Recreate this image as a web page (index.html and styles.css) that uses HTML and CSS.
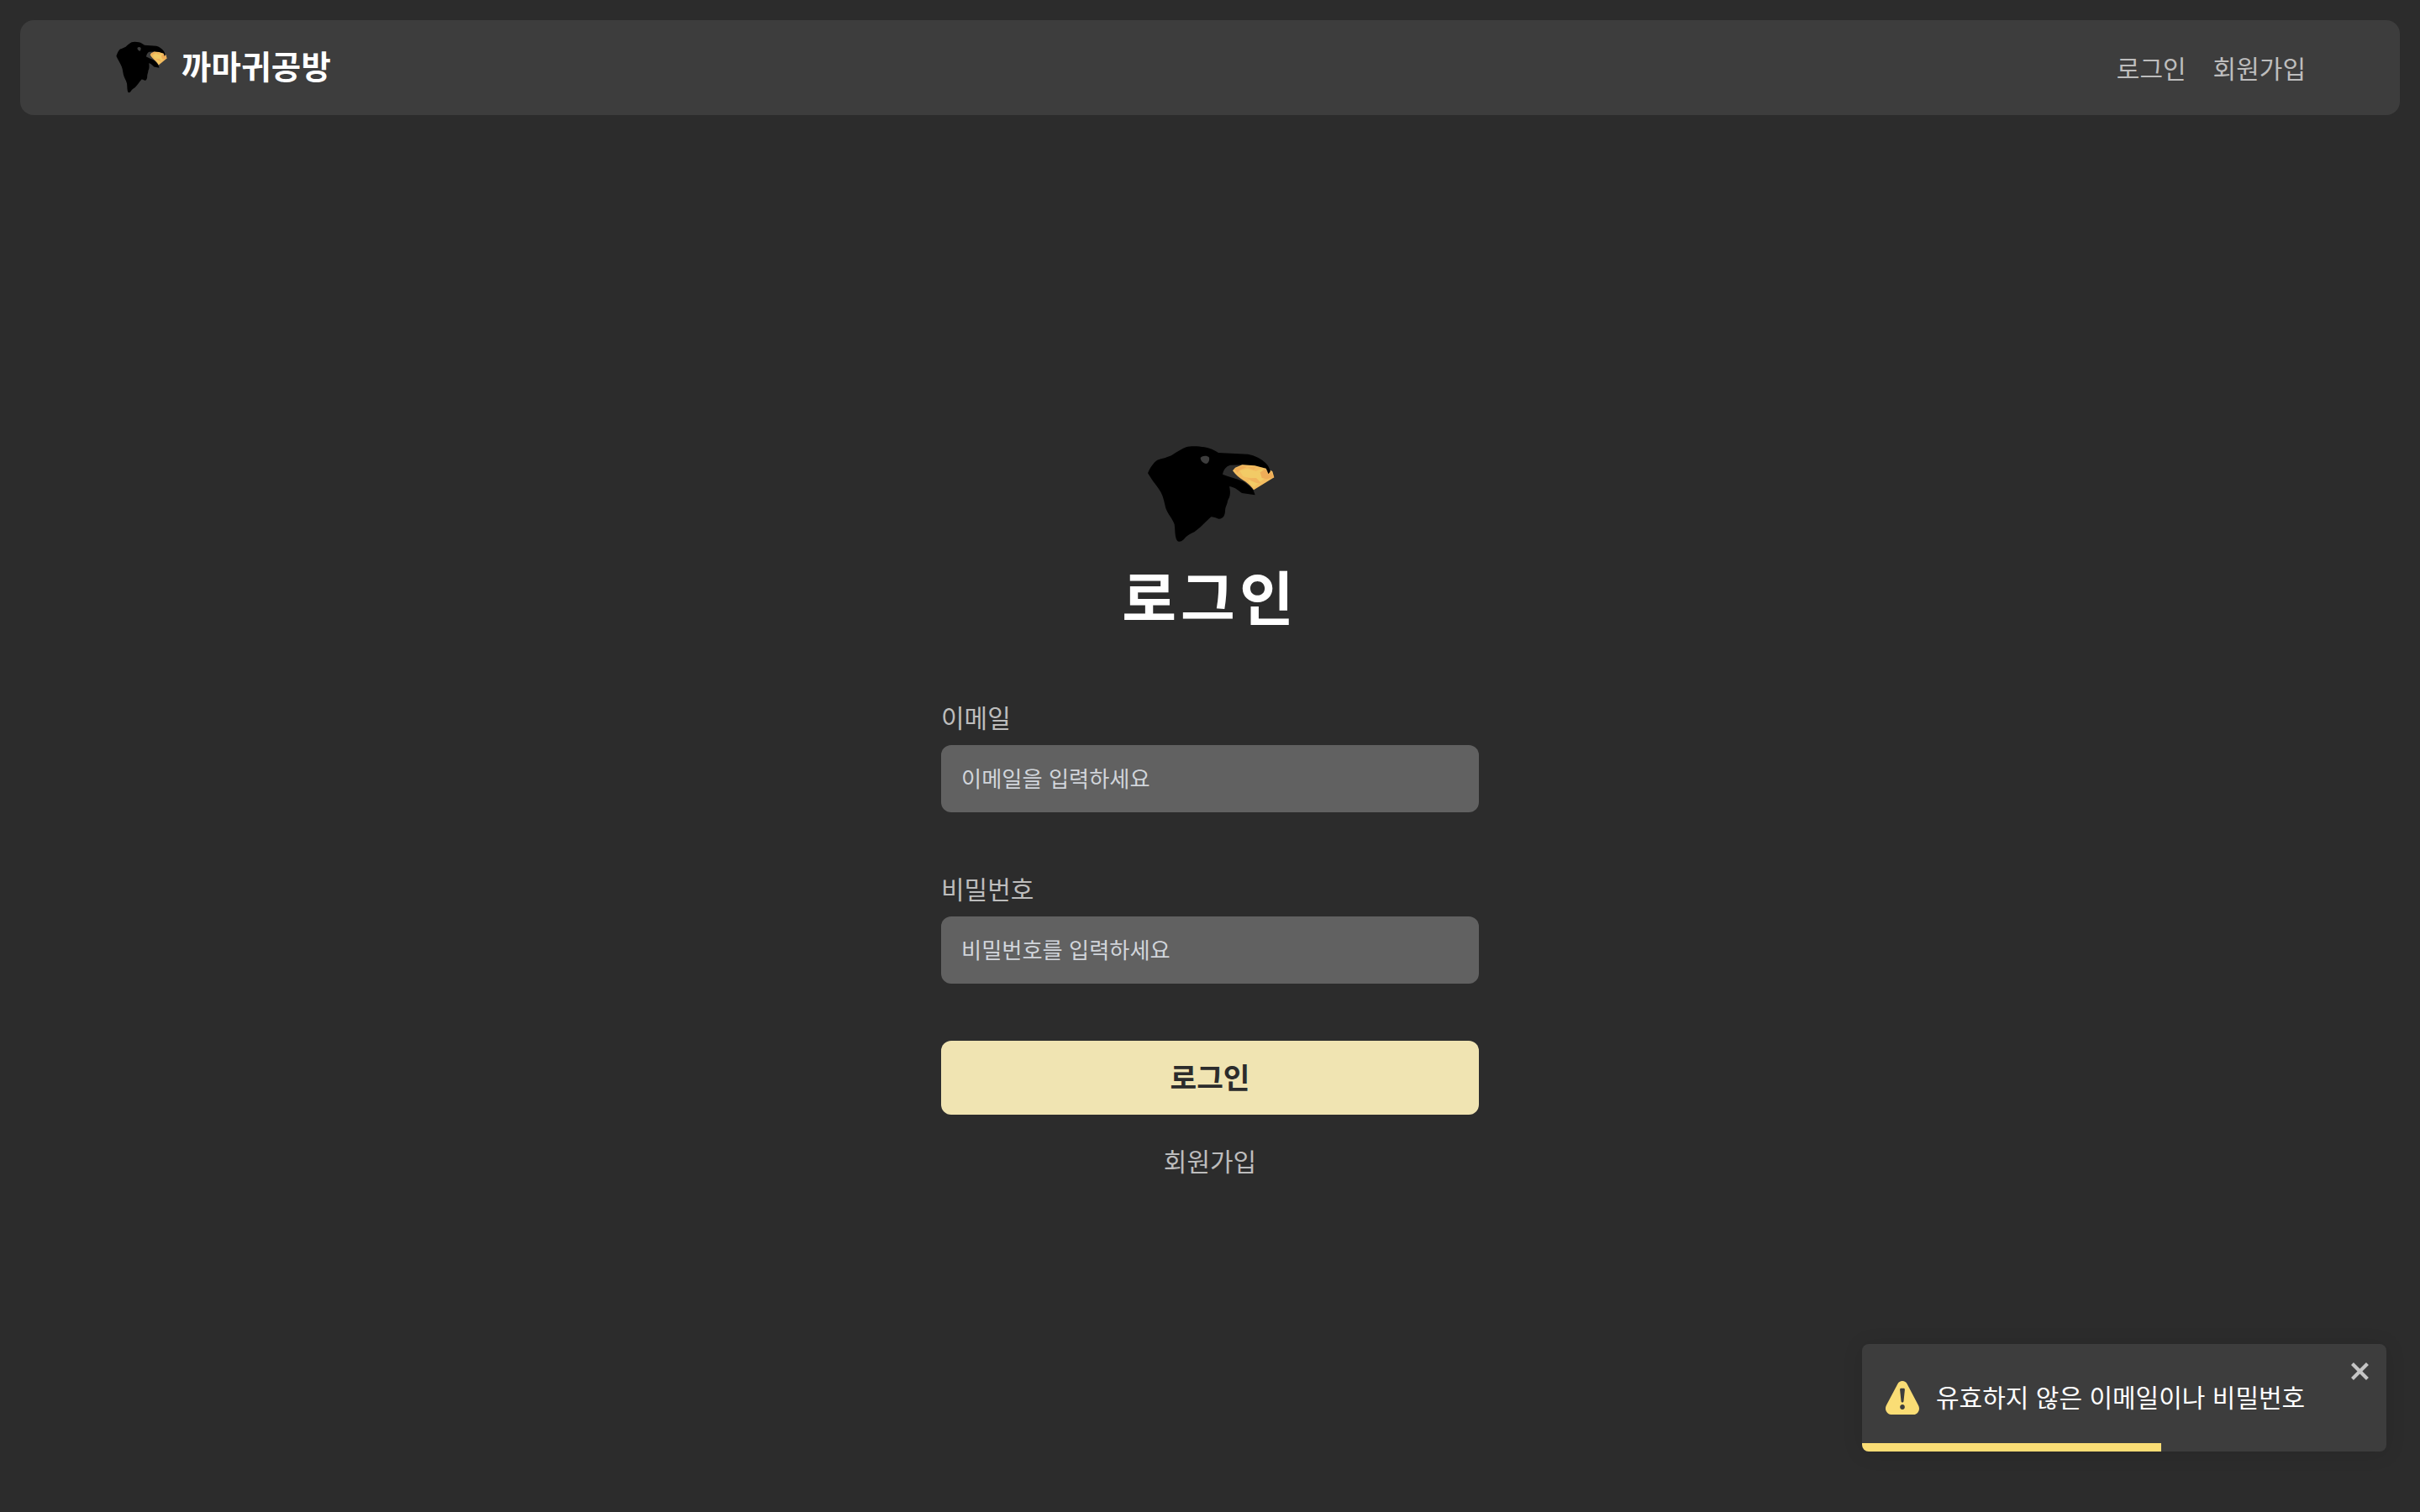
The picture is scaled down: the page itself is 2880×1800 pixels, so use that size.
FILE: index.html
```html
<!DOCTYPE html>
<html lang="ko">
<head>
  <meta charset="utf-8">
  <title>까마귀공방</title>
  <link rel="stylesheet" href="styles.css">
</head>
<body>
  <svg class="defs" aria-hidden="true">
    <symbol id="crow" viewBox="120 84 480 360" preserveAspectRatio="none">
      <path d="M138 190C145 172 158 152 172 143C190 138 206 134 222 127C240 115 260 103 275 97C290 92 318 93 340 97C358 100 376 108 390 117L495 122C520 126 545 140 558 153C568 163 574 172 575 190L568 193C567 183 565 178 560 173C535 168 508 163 475 160L432 161C417 165 408 178 405 194C425 203 455 209 478 219C495 229 509 243 515 251L521 268L474 261C463 253 448 239 429 237C432 250 433 262 430 273C428 280 423 285 422 295C420 305 414 312 414 324C414 339 407 354 391 353C386 353 384 348 364 346C344 364 322 388 304 400C288 407 276 414 266 427C256 436 248 437 242 430C234 416 236 395 233 373C225 350 208 334 202 315C197 297 195 278 185 259C174 239 158 222 149 207Z"/>
      <path class="crow-eye" d="M326 135C333 127 350 126 357 134C359 144 354 155 346 156C336 155 326 146 326 135Z"/>
      <path class="gem" d="M441 181L450 170L475 160L520 163L560 173L568 193L575 190L576 179L583 184L589 205L516 250C505 234 495 226 481 217C466 208 451 196 441 181Z"/>
      <path class="gem-light" d="M466 181L493 174L524 183L550 172L545 191L556 208L516 240L496 222L503 207L478 202Z"/>
      <path class="gem-deep" d="M539 187L558 176L568 193L576 184L589 205L562 211L545 207ZM447 175L474 164L492 167L464 180L458 190Z"/>
      <path class="gem-mid" d="M493 208L525 207L543 226L528 226L509 218ZM495 168L524 168L516 178Z"/>
    </symbol>
  </svg>

  <header class="header">
    <a class="brand">
      <svg class="brand-logo"><use href="#crow"/></svg>
      <span class="brand-name">까마귀공방</span>
    </a>
    <nav class="nav">
      <a class="link">로그인</a>
      <a class="link">회원가입</a>
    </nav>
  </header>

  <main class="login">
    <svg class="login-logo"><use href="#crow"/></svg>
    <h1 class="login-title">로그인</h1>
    <form class="form">
      <div class="field">
        <label class="label" for="email">이메일</label>
        <input class="input" id="email" type="email" placeholder="이메일을 입력하세요">
      </div>
      <div class="field">
        <label class="label" for="password">비밀번호</label>
        <input class="input" id="password" type="password" placeholder="비밀번호를 입력하세요">
      </div>
      <button class="submit" type="button">로그인</button>
    </form>
    <a class="link">회원가입</a>
  </main>

  <div class="toast" role="alert">
    <svg class="toast-icon" viewBox="0 0 24 24"><path d="M23.32 17.191L15.438 2.184C14.728.833 13.416 0 11.996 0c-1.42 0-2.733.833-3.443 2.184L.533 17.448a4.744 4.744 0 000 4.368C1.243 23.167 2.555 24 3.975 24h16.05C22.22 24 24 22.044 24 19.632c0-.904-.251-1.746-.68-2.44zm-9.622 1.46c0 1.033-.724 1.823-1.698 1.823s-1.698-.79-1.698-1.822v-.043c0-1.028.724-1.822 1.698-1.822s1.698.79 1.698 1.822v.043zm.039-12.285l-.84 8.06c-.057.581-.408.943-.897.943-.49 0-.84-.367-.896-.942l-.84-8.065c-.057-.624.25-1.095.779-1.095h1.91c.528.005.84.476.784 1.1z"/></svg>
    <span class="toast-text">유효하지 않은 이메일이나 비밀번호</span>
    <svg class="toast-close" viewBox="0 0 14 16"><path fill-rule="evenodd" d="M7.71 8.23l3.75 3.75-1.48 1.48-3.75-3.75-3.75 3.75L1 11.98l3.75-3.75L1 4.48 2.48 3l3.75 3.75L9.98 3l1.48 1.48-3.75 3.75z"/></svg>
    <div class="toast-progress"></div>
  </div>
</body>
</html>
```

FILE: styles.css
```css
* {
  box-sizing: border-box;
}

body {
  margin: 0;
  height: 1800px;
  padding: 24px;
  overflow: hidden;
  background: #2c2c2c;
  color: #fff;
  font-family: "Noto Sans CJK KR", sans-serif;
}

.defs {
  position: absolute;
  width: 0;
  height: 0;
}

.crow-eye { fill: #3d3d3d; }
.gem { fill: #f3bd60; }
.gem-light { fill: #f2cb66; }
.gem-deep { fill: #efad58; }
.gem-mid { fill: #f0b35c; }

.header {
  display: flex;
  align-items: center;
  justify-content: space-between;
  height: 113px;
  padding: 0 112px 2px;
  border-radius: 16px;
  background: #3d3d3d;
}

.brand {
  display: flex;
  align-items: center;
  gap: 16px;
}

.brand-logo {
  width: 64px;
  height: 64px;
}

.brand-name {
  padding-bottom: 6px;
  font-size: 38.4px;
  font-weight: 700;
  line-height: 56px;
  letter-spacing: 0.3px;
}

.nav {
  display: flex;
  gap: 32px;
}

.link,
.label {
  color: #bdbdbd;
  font-size: 30px;
  line-height: 44px;
}

.login {
  display: flex;
  flex-direction: column;
  align-items: center;
  width: 640px;
  margin: 391px auto 0;
}

.login-logo {
  width: 160px;
  height: 120px;
}

.login-title {
  margin: 11px 0 74px;
  font-size: 70.4px;
  font-weight: 700;
  line-height: 98px;
  letter-spacing: 5px;
}

.form {
  display: flex;
  flex-direction: column;
  gap: 68px;
  width: 100%;
  margin-bottom: 32px;
}

.field {
  display: flex;
  flex-direction: column;
  gap: 12px;
}

.input {
  height: 80px;
  padding: 0 24px 2px;
  border: 0;
  border-radius: 12px;
  background: #616161;
  color: #fff;
  font: 26.24px "Noto Sans CJK KR", sans-serif;
}

.input::placeholder {
  color: #d1d5db;
}

.submit {
  height: 88px;
  padding: 0 0 5px;
  border: 0;
  border-radius: 12px;
  background: #f0e4b2;
  color: #2c2c2c;
  font: 700 34.4px "Noto Sans CJK KR", sans-serif;
}

.toast {
  position: absolute;
  right: 40px;
  bottom: 72px;
  display: flex;
  align-items: center;
  width: 624px;
  height: 128px;
  padding: 0 28px;
  overflow: hidden;
  border-radius: 8px;
  background: #3d3d3d;
  box-shadow: 0 2px 24px rgba(0, 0, 0, 0.1);
}

.toast-icon {
  width: 40px;
  height: 40px;
  margin-right: 20px;
  fill: #fadd75;
}

.toast-text {
  padding-bottom: 5px;
  font-size: 30px;
  line-height: 44px;
  white-space: nowrap;
}

.toast-close {
  position: absolute;
  top: 16px;
  right: 16px;
  width: 28px;
  height: 32px;
  fill: #fff;
  opacity: 0.7;
}

.toast-progress {
  position: absolute;
  bottom: 0;
  left: 0;
  width: 356px;
  height: 10px;
  background: #fadd75;
}
```
